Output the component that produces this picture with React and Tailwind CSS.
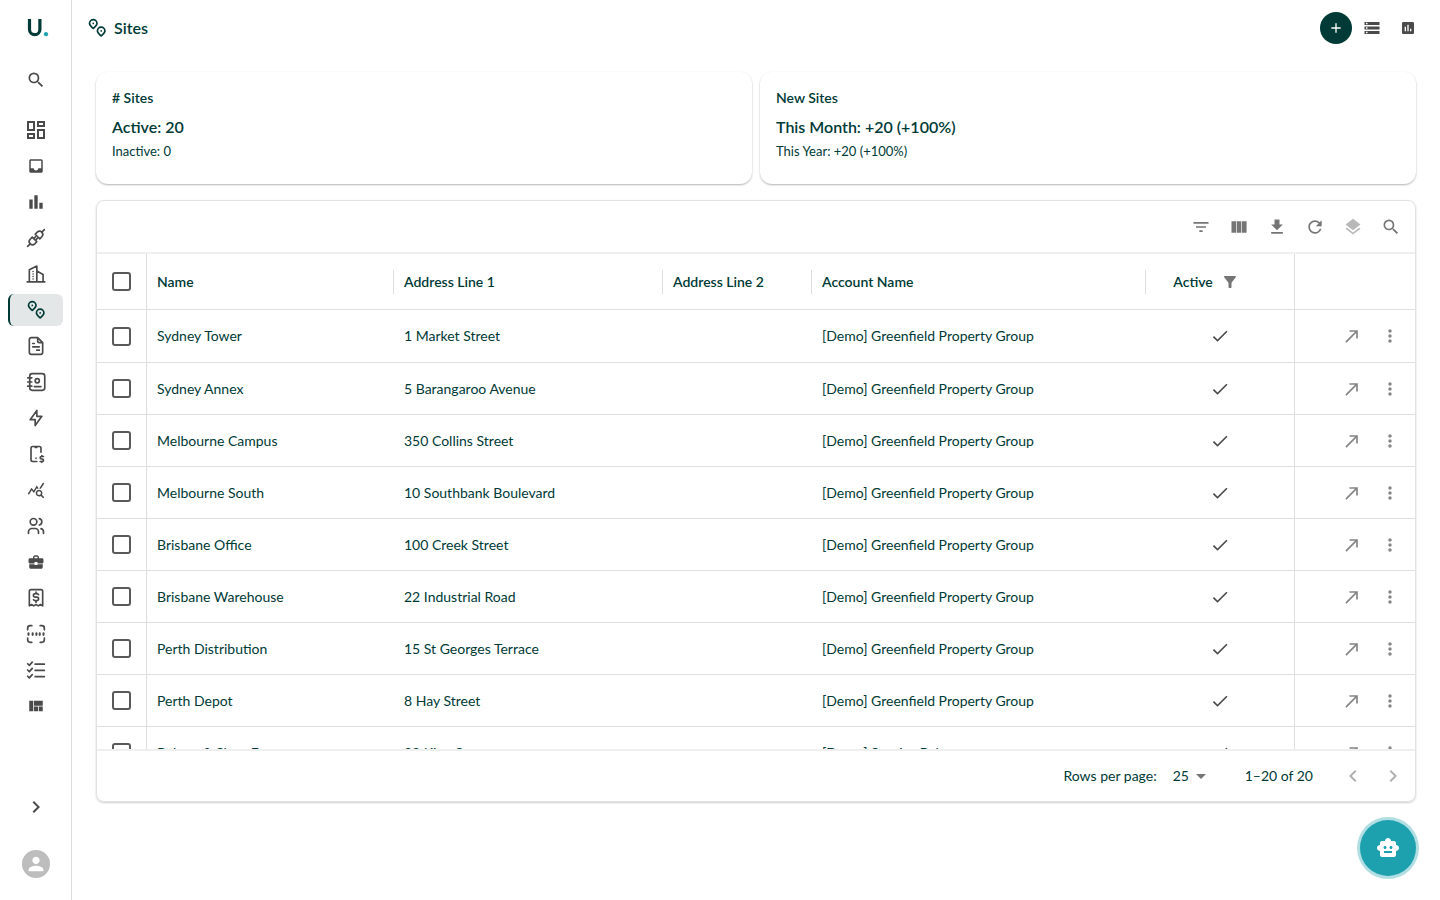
import React, { useState } from 'react';
import {
  MdAdd, MdArrowDropDown, MdAssessment, MdBarChart, MdBusinessCenter, MdCallMade, MdCheck, MdChevronLeft,
  MdChevronRight, MdDownload, MdFilterAlt, MdFilterList, MdInbox, MdLayers, MdMoreVert, MdOutlineDashboard,
  MdPerson, MdQueryStats, MdRefresh, MdSearch, MdSmartToy, MdStorage, MdViewQuilt,
} from 'react-icons/md';
import { TbBolt, TbDeviceMobileDollar, TbUsers } from 'react-icons/tb';

const Svg = ({ size = 20, width = 2, className, children }) => (
  <svg width={size} height={size} viewBox="0 0 24 24" fill="none" stroke="currentColor" strokeWidth={width} strokeLinecap="round" strokeLinejoin="round" className={className} aria-hidden="true">
    {children}
  </svg>
);

const SitesIcon = ({ size = 20 }) => (
  <Svg size={size}>
    <path d="M7.500 12.500C5.500 10.700 3 8.900 3 6.500a4.500 4.500 0 0 1 9 0c0 2.400-2.500 4.200-4.500 6z" />
    <path d="M17 21.500c-2-1.800-4.500-3.600-4.500-6a4.500 4.500 0 0 1 9 0c0 2.400-2.500 4.200-4.500 6z" />
    <path d="M7.500 6.500v.01M17 15.500v.01" />
  </Svg>
);

const PlugIcon = () => (
  <Svg>
    <path d="M2 22l3-3M22 2l-3 3" />
    <path d="M5 19a4 4 0 0 1 0-5.500l2.500-2.500 5.500 5.500-2.500 2.500a4 4 0 0 1-5.500 0z" />
    <path d="M19 5a4 4 0 0 1 0 5.500L16.500 13 11 7.500 13.500 5A4 4 0 0 1 19 5z" />
    <path d="M9.500 12.500l2-2M11.500 14.500l2-2" />
  </Svg>
);

const BuildingIcon = () => (
  <Svg>
    <path d="M1.500 21.500h21M4 21.500V7l9-4.500v19M13 8.500l7.500 4v9" />
    <path d="M8.500 9v.01M8.500 12v.01M8.500 15v.01M8.500 18v.01" />
  </Svg>
);

const DocumentIcon = () => (
  <Svg>
    <path d="M14 2v4a2 2 0 0 0 2 2h4v11.500a2.500 2.500 0 0 1-2.500 2.500h-11A2.500 2.500 0 0 1 4 19.500v-15A2.500 2.500 0 0 1 6.500 2H14l6 6" />
    <path d="M8 9h2M8 13h8M13 17h3" />
  </Svg>
);

const ContactsIcon = () => (
  <Svg>
    <rect x="4.500" y="2" width="18" height="20" rx="3" />
    <path d="M2 7h5M2 12h5M2 17h5M10 17.500h8" />
    <circle cx="13.500" cy="10.500" r="2.500" />
  </Svg>
);

const ReceiptIcon = () => (
  <Svg>
    <path d="M4 21.500V4a2 2 0 0 1 2-2h12a2 2 0 0 1 2 2v17.500l-2.700-1.700-2.600 1.700-2.700-1.700-2.700 1.700-2.600-1.700z" />
    <path d="M15 8a2.500 2 0 0 0-2-1.200h-2a2.100 2.100 0 0 0 0 4.200h2a2.100 2.100 0 0 1 0 4.200h-2A2.500 2 0 0 1 9 14M12 5v1.800M12 15.200V17" />
  </Svg>
);

const ScanIcon = () => (
  <Svg>
    <path d="M2 7V5a3 3 0 0 1 3-3h2M17 2h2a3 3 0 0 1 3 3v2M22 17v2a3 3 0 0 1-3 3h-2M7 22H5a3 3 0 0 1-3-3v-2" />
    <path d="M3 11v2M8 11v2M12.500 11v2M16.500 11v2M21 11v2" strokeWidth="2.500" />
  </Svg>
);

const ChecklistIcon = () => (
  <Svg>
    <path d="M11 5h11M11 12.500h11M11 20h11" />
    <path d="M2 4.500L4 6.500l3.500-4M2 12l2 2 3.500-4M2 19.500l2 2 3.500-4" />
  </Svg>
);

const ColumnsIcon = ({ size }) => (
  <svg width={size} height={size} viewBox="0 0 24 24" fill="currentColor" aria-hidden="true">
    <path d="M3 5h5.500v14H3zM9.300 5h5.500v14H9.300zM15.600 5h5.500v14h-5.500z" />
  </svg>
);

const navItems = [
  { label: 'Dashboard', icon: <MdOutlineDashboard size={24} /> },
  { label: 'Inbox', icon: <MdInbox size={18} /> },
  { label: 'Reports', icon: <MdBarChart size={20} /> },
  { label: 'Integrations', icon: <PlugIcon /> },
  { label: 'Accounts', icon: <BuildingIcon /> },
  { label: 'Sites', icon: <SitesIcon />, active: true },
  { label: 'Documents', icon: <DocumentIcon /> },
  { label: 'Contacts', icon: <ContactsIcon /> },
  { label: 'Utilities', icon: <TbBolt size={20} /> },
  { label: 'Mobile billing', icon: <TbDeviceMobileDollar size={20} /> },
  { label: 'Insights', icon: <MdQueryStats size={18} /> },
  { label: 'Users', icon: <TbUsers size={20} /> },
  { label: 'Business', icon: <MdBusinessCenter size={18} /> },
  { label: 'Invoices', icon: <ReceiptIcon /> },
  { label: 'Scan', icon: <ScanIcon /> },
  { label: 'Tasks', icon: <ChecklistIcon /> },
  { label: 'Layouts', icon: <MdViewQuilt size={18} /> },
];

const GREENFIELD = '[Demo] Greenfield Property Group';

const sites = [
  { name: 'Sydney Tower', address: '1 Market Street', account: GREENFIELD },
  { name: 'Sydney Annex', address: '5 Barangaroo Avenue', account: GREENFIELD },
  { name: 'Melbourne Campus', address: '350 Collins Street', account: GREENFIELD },
  { name: 'Melbourne South', address: '10 Southbank Boulevard', account: GREENFIELD },
  { name: 'Brisbane Office', address: '100 Creek Street', account: GREENFIELD },
  { name: 'Brisbane Warehouse', address: '22 Industrial Road', account: GREENFIELD },
  { name: 'Perth Distribution', address: '15 St Georges Terrace', account: GREENFIELD },
  { name: 'Perth Depot', address: '8 Hay Street', account: GREENFIELD },
  { name: 'Bakery & Shop Front', address: '88 King Street', account: '[Demo] Sunrise Bakery' },
];

const toolbar = [
  { label: 'Filter', icon: MdFilterList },
  { label: 'Columns', icon: ColumnsIcon },
  { label: 'Download', icon: MdDownload },
  { label: 'Refresh', icon: MdRefresh },
  { label: 'Group', icon: MdLayers, disabled: true },
  { label: 'Search', icon: MdSearch },
];

const Checkbox = ({ label }) => (
  <input
    type="checkbox"
    aria-label={label}
    className="mx-auto block size-[19px] appearance-none rounded-[3px] border-2 border-[#5a5a5a] checked:bg-[#003a36]"
  />
);

const Sidebar = () => (
  <aside className="flex w-[72px] shrink-0 flex-col items-center border-r border-[#dcdcdc] text-[#4a4a4a]">
    <a href="#" aria-label="Home" className="flex h-14 items-center pl-1">
      <svg width="22" height="20" viewBox="0 0 22 20" fill="none" aria-hidden="true">
        <path d="M2.500 1v10.500a5.200 5.200 0 0 0 10.400 0V1" stroke="#003a36" strokeWidth="3.200" />
        <circle cx="19" cy="16.200" r="2.100" fill="#1ea1af" />
      </svg>
    </a>
    <button aria-label="Search" className="mt-2 flex h-8 w-14 items-center justify-center">
      <MdSearch size={20} />
    </button>
    <nav className="mt-[18px] flex flex-col gap-1">
      {navItems.map((item) => (
        <a
          key={item.label}
          href="#"
          aria-label={item.label}
          className={
            item.active
              ? 'flex h-8 w-[55px] items-center justify-center rounded-md border-l-2 border-[#003a36] bg-[#e3e7e7] pr-px text-[#003a36]'
              : 'flex h-8 w-[55px] items-center justify-center border-l-2 border-transparent pr-px'
          }
        >
          {item.icon}
        </a>
      ))}
    </nav>
    <button aria-label="Expand menu" className="mt-auto mb-[27px] flex size-8 items-center justify-center">
      <MdChevronRight size={24} />
    </button>
    <button aria-label="Profile" className="mb-[22px] flex size-7 items-center justify-center rounded-full bg-[#bdbdbd] text-white">
      <MdPerson size={22} />
    </button>
  </aside>
);

const StatCard = ({ title, main, sub }) => (
  <section className="h-28 rounded-xl px-4 pt-4 shadow-[0_1px_2px_rgba(0,0,0,0.3)]">
    <h2 className="text-sm leading-5 font-semibold">{title}</h2>
    <p className="mt-[7px] text-base leading-6 font-semibold">{main}</p>
    <p className="text-[13px] leading-6">{sub}</p>
  </section>
);

const HeaderCell = ({ children }) => (
  <th scope="col" className="p-0 text-left font-semibold">
    <div className="flex h-6 items-center border-r border-[#dedede] pl-[10px]">{children}</div>
  </th>
);

const SitesTable = () => {
  const [pageSize, setPageSize] = useState('25');

  return (
    <section className="mt-4 overflow-hidden rounded-lg border border-[#e2e2e2] shadow-[0_1px_2px_rgba(0,0,0,0.2)]">
      <div className="flex h-[51px] items-center justify-end gap-[18px] pr-3.5 text-[#757575]">
        {toolbar.map(({ label, icon: Icon, disabled }) => (
          <button key={label} aria-label={label} disabled={disabled} className="disabled:text-[#b8b8b8]">
            <Icon size={20} />
          </button>
        ))}
      </div>

      <div className="h-[499px] overflow-hidden border-y-2 border-[#efefef]">
        <table className="w-full table-fixed border-separate border-spacing-0 text-sm">
          <colgroup>
            <col className="w-[50px]" />
            <col className="w-[247px]" />
            <col className="w-[269px]" />
            <col className="w-[149px]" />
            <col />
            <col className="w-[149px]" />
            <col className="w-[120px]" />
          </colgroup>
          <thead>
            <tr className="h-14 *:border-b *:border-[#dedede]">
              <th scope="col" className="border-r p-0"><Checkbox label="Select all sites" /></th>
              <HeaderCell>Name</HeaderCell>
              <HeaderCell>Address Line 1</HeaderCell>
              <HeaderCell>Address Line 2</HeaderCell>
              <HeaderCell>Account Name</HeaderCell>
              <th scope="col" className="border-r p-0 font-semibold">
                <div className="flex items-center justify-center gap-2 pr-7">
                  Active
                  <MdFilterAlt size={18} className="text-[#757575]" />
                </div>
              </th>
              <th scope="col" aria-label="Actions" className="p-0" />
            </tr>
          </thead>
          <tbody>
            {sites.map((site) => (
              <tr key={site.name} className="h-[52px] first:h-[53px] *:border-b *:border-[#dedede]">
                <td className="border-r p-0"><Checkbox label={`Select ${site.name}`} /></td>
                <td className="py-0 pr-0 pl-[10px]">{site.name}</td>
                <td className="py-0 pr-0 pl-[10px]">{site.address}</td>
                <td className="p-0" />
                <td className="py-0 pr-0 pl-[10px]">{site.account}</td>
                <td className="border-r p-0">
                  <MdCheck size={20} className="mx-auto text-[#4a4a4a]" aria-label="Yes" />
                </td>
                <td className="py-0 pr-[15px] pl-0">
                  <div className="flex justify-end gap-[18px] text-[#858585]">
                    <button aria-label={`Open ${site.name}`}><MdCallMade size={20} /></button>
                    <button aria-label={`More actions for ${site.name}`}><MdMoreVert size={20} /></button>
                  </div>
                </td>
              </tr>
            ))}
          </tbody>
        </table>
      </div>

      <footer className="flex h-[50px] items-center justify-end pr-[10px] text-sm">
        <label htmlFor="page-size">Rows per page:</label>
        <div className="relative ml-4">
          <select
            id="page-size"
            value={pageSize}
            onChange={(e) => setPageSize(e.target.value)}
            className="block w-9 appearance-none bg-transparent"
          >
            <option>25</option>
            <option>50</option>
            <option>100</option>
          </select>
          <MdArrowDropDown size={24} className="pointer-events-none absolute -top-0.5 left-4 text-[#757575]" />
        </div>
        <span className="ml-9">1–20 of 20</span>
        <button aria-label="Previous page" disabled className="ml-7 text-[#b0b0b0]"><MdChevronLeft size={24} /></button>
        <button aria-label="Next page" disabled className="ml-4 text-[#b0b0b0]"><MdChevronRight size={24} /></button>
      </footer>
    </section>
  );
};

export default function App() {
  return (
    <div className="flex min-h-screen bg-white font-['Lato',sans-serif] text-[#003a36]">
      <Sidebar />
      <div className="min-w-0 flex-1">
        <header className="flex h-14 items-center justify-between pr-6 pl-[15px]">
          <h1 className="flex items-center gap-[7px] text-base font-semibold">
            <SitesIcon />
            Sites
          </h1>
          <div className="flex items-center text-[#4a4a4a]">
            <button aria-label="Add site" className="flex size-8 items-center justify-center rounded-full bg-[#003a36] text-white">
              <MdAdd size={16} />
            </button>
            <button aria-label="List view" className="ml-[11px]"><MdStorage size={18} /></button>
            <button aria-label="Chart view" className="ml-[19px]"><MdAssessment size={16} /></button>
          </div>
        </header>
        <main className="px-6 pt-4">
          <div className="grid grid-cols-2 gap-2">
            <StatCard title="# Sites" main="Active: 20" sub="Inactive: 0" />
            <StatCard title="New Sites" main="This Month: +20 (+100%)" sub="This Year: +20 (+100%)" />
          </div>
          <SitesTable />
        </main>
      </div>
      <button
        aria-label="Open assistant"
        className="fixed right-6 bottom-6 flex size-14 items-center justify-center rounded-full bg-[#1ea1af] text-white shadow-[0_0_0_3px_rgba(30,161,175,0.35)]"
      >
        <MdSmartToy size={24} />
      </button>
    </div>
  );
}
